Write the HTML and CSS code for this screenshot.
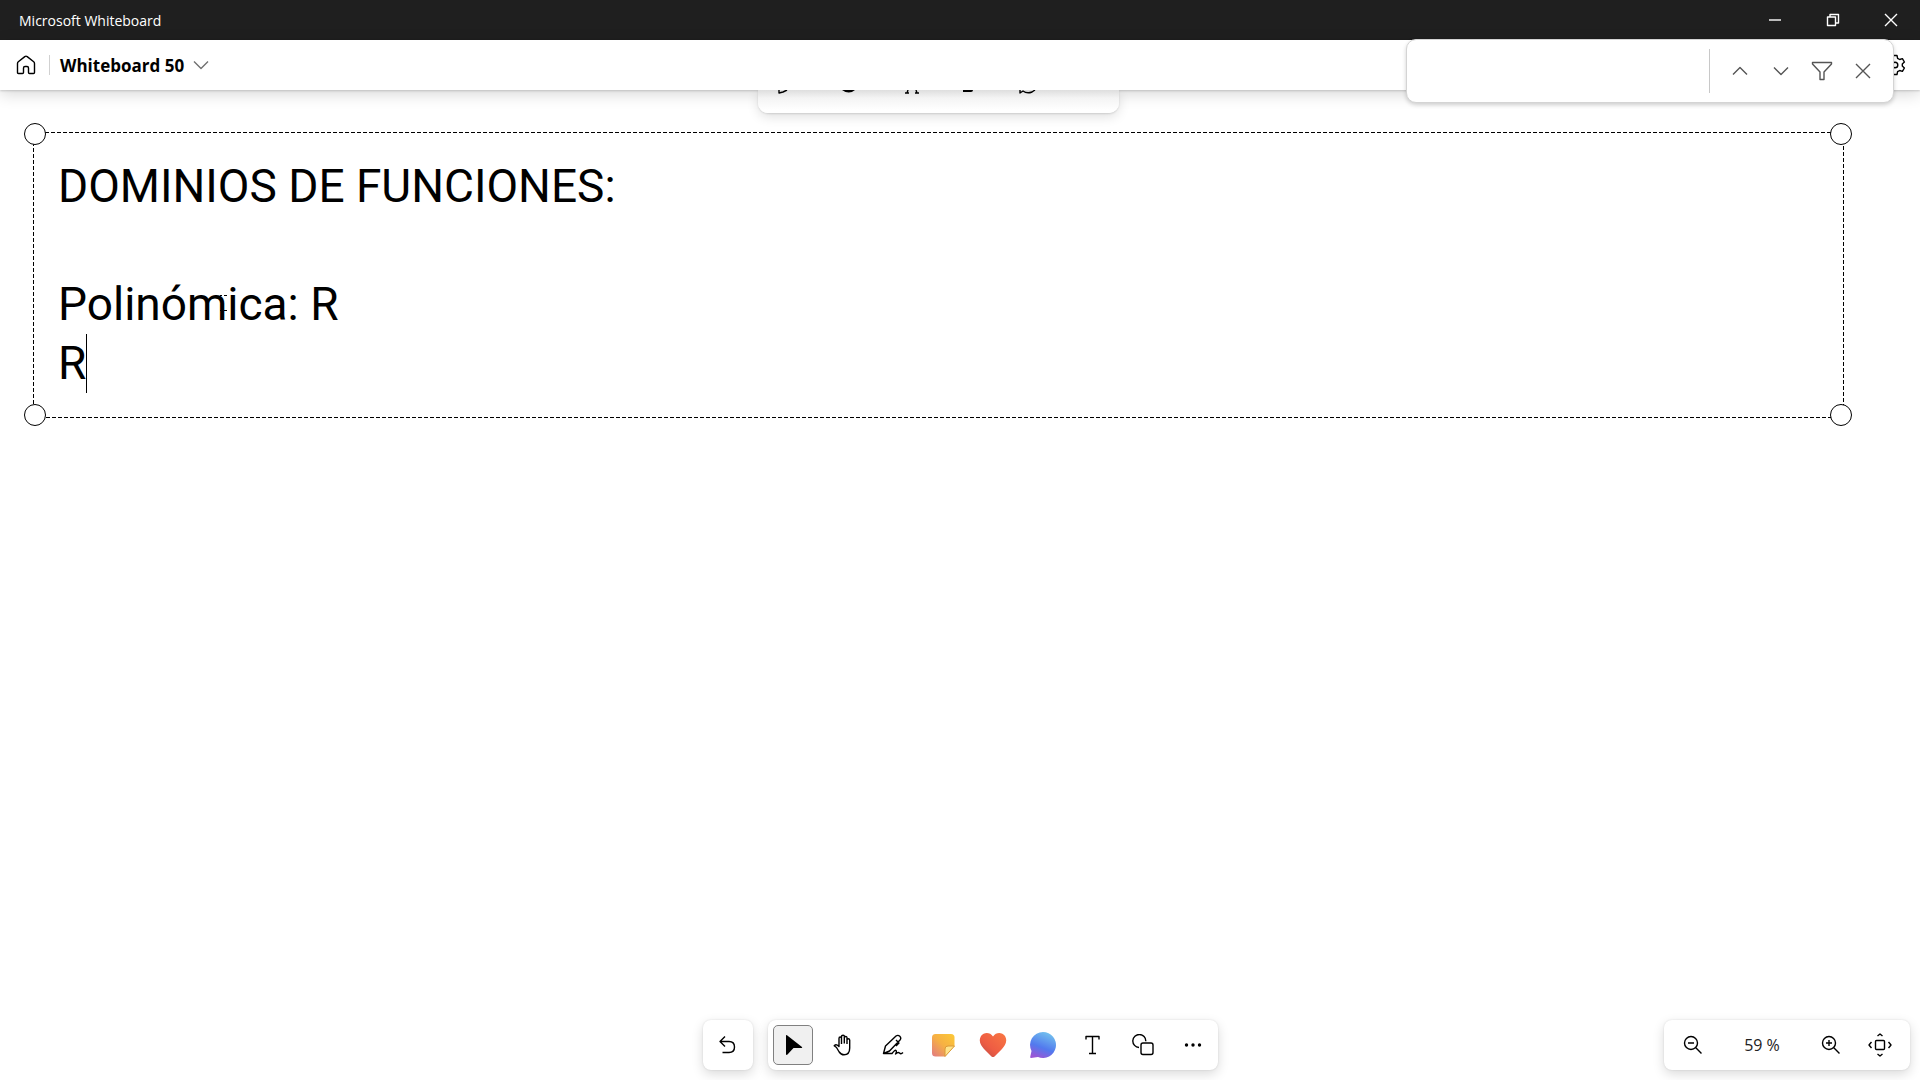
FILE: index.html
```html
<!DOCTYPE html>
<html lang="es">
<head>
    <meta charset="utf-8">
    <title>Microsoft Whiteboard</title>
    <link rel="stylesheet" href="styles.css">
</head>
<body>
    <div class="titlebar">
        <span class="app-name">Microsoft Whiteboard</span>
        <div class="window-buttons">
            <button aria-label="Minimizar"><svg width="14" height="14" viewBox="0 0 14 14"><path d="M1 7H13"/></svg></button>
            <button aria-label="Restaurar"><svg width="14" height="14" viewBox="0 0 14 14"><path d="M1.500 4H9.500V12.500H1.500ZM4 4V1.500H12.500V10H9.500"/></svg></button>
            <button aria-label="Cerrar"><svg width="14" height="14" viewBox="0 0 14 14"><path d="M1 1L13 13M13 1L1 13"/></svg></button>
        </div>
    </div>

    <header class="header">
        <button class="home" aria-label="Inicio"><svg width="20" height="20" viewBox="0 0 20 20"><path d="M1.500 8.500Q1.500 7.500 2.300 6.800L8.800 1.600Q10 .7 11.200 1.600L17.700 6.800Q18.500 7.500 18.500 8.500V17.500Q18.500 18.500 17.500 18.500H13.500Q12.500 18.500 12.500 17.500V13Q12.500 11.500 11 11.500H9Q7.500 11.500 7.500 13V17.500Q7.500 18.500 6.500 18.500H2.500Q1.500 18.500 1.500 17.500Z"/></svg></button>
        <button class="board-name">Whiteboard 50 <svg width="16" height="10" viewBox="0 0 16 10"><path d="M1 1.500L8 8.500L15 1.500"/></svg></button>
        <button class="settings" aria-label="Configuración"><svg width="22" height="22" viewBox="0 0 22 22"><path d="M9 1.500H13L13.600 4.300L15.700 5.500L18.400 4.600L20.400 8L18.300 9.900V12.100L20.400 14L18.400 17.400L15.700 16.500L13.600 17.700L13 20.500H9L8.400 17.700L6.300 16.500L3.600 17.400L1.600 14L3.700 12.100V9.900L1.600 8L3.600 4.600L6.300 5.500L8.400 4.300Z"/><circle cx="11" cy="11" r="2.800"/></svg></button>
    </header>

    <form class="find">
        <input type="text" aria-label="Buscar">
        <div class="find-buttons">
            <button type="button" aria-label="Anterior"><svg width="16" height="10" viewBox="0 0 16 10"><path d="M1 8.500L8 1.500L15 8.500"/></svg></button>
            <button type="button" aria-label="Siguiente"><svg width="16" height="10" viewBox="0 0 16 10"><path d="M1 1.500L8 8.500L15 1.500"/></svg></button>
            <button type="button" aria-label="Filtro"><svg width="22" height="20" viewBox="0 0 22 20"><path d="M1.500 1.500H20.500V3L13 11V18.500H9V11L1.500 3Z"/></svg></button>
            <button type="button" aria-label="Cerrar búsqueda"><svg width="16" height="16" viewBox="0 0 16 16"><path d="M1 1L15 15M15 1L1 15"/></svg></button>
        </div>
    </form>

    <main class="canvas">
        <div class="context-bar">
            <svg width="360" height="23" viewBox="0 0 360 23">
                <path d="M21 0V3L25 2L29 0"/>
                <path class="solid" d="M84 0H97Q91 5 84 0ZM205 0H215Q215 2 213 2H205Z"/>
                <path d="M147 3H151M149 3L150 0M157 3H161M159 3L158 0M262 0V3L265 1Q269 4 274 2L277 0"/>
            </svg>
        </div>

        <div class="text-box">
            <svg class="outline" width="100%" height="100%"><rect width="100%" height="100%"/></svg>
            <p>DOMINIOS DE FUNCIONES:</p>
            <p><br></p>
            <p>Polinómica: R</p>
            <p class="editing">R</p>
            <span class="handle top left"></span>
            <span class="handle top right"></span>
            <span class="handle bottom left"></span>
            <span class="handle bottom right"></span>
            <svg class="pointer" width="9" height="18" viewBox="0 0 9 18"><path d="M1 1.500H3M5 1.500H8M1 16.500H3M5 16.500H8"/></svg>
        </div>
    </main>

    <footer class="footer">
        <div class="panel undo">
            <button aria-label="Deshacer"><svg width="20" height="20" viewBox="0 0 20 20"><path d="M7 1.500L2 6.500L7 11.500M2 6.500H11Q16.500 6.500 16.500 12T11 17.500H4.500"/></svg></button>
        </div>
        <div class="panel tools">
            <button class="selected" aria-label="Seleccionar"><svg width="20" height="22" viewBox="0 0 20 22"><path class="solid" d="M3 1.500Q3 .5 4 1.200L19 13Q19.700 14 18.500 14H10.500L4.500 20.500Q3 21.500 3 20Z"/></svg></button>
            <button aria-label="Mover"><svg width="22" height="22" viewBox="0 0 22 22"><path d="M7 11V4.500Q7 3 8.200 3T9.500 4.500V10M9.500 9V2.500Q9.500 1.200 11 1.200T12.300 2.500V9.500M12.300 4Q12.300 2.500 13.700 2.500T15 4V10M15 6Q15 4.700 16.300 4.700T17.700 6V14Q17.700 20.800 12 20.800Q9 20.800 7.200 18L4.500 13.500L2.200 11.800Q4.500 9.500 7 12.500V10"/></svg></button>
            <button aria-label="Entradas de lápiz"><svg width="22" height="22" viewBox="0 0 22 22"><path d="M1.500 19.500L3.500 12L14 2Q16 .6 17.800 2.300T18 6L7.500 17ZM14 6L17 9L14 12M1.500 19.500H10Q13 15.500 14 16.500T13.500 20Q16 17.500 17.500 19T21 18.500"/></svg></button>
            <button aria-label="Notas"><svg width="24" height="24" viewBox="0 0 24 24">
                <defs><linearGradient id="note" x1="1" y1="0" x2="0" y2="1"><stop offset="0" stop-color="#fcc936"/><stop offset=".5" stop-color="#f6b044"/><stop offset="1" stop-color="#e17983"/></linearGradient></defs>
                <path class="note" d="M4.500 1H20Q23.500 1 23.500 4.500V13L14 23.500H4.500Q1 23.500 1 20V4.500Q1 1 4.500 1Z"/><path class="fold" d="M23.500 13H17Q14 13 14 16V23.500Z"/></svg></button>
            <button aria-label="Reacciones"><svg width="28" height="26" viewBox="0 0 28 26">
                <defs><linearGradient id="heart" x1="1" y1="0" x2="0" y2="1"><stop offset="0" stop-color="#f97843"/><stop offset=".6" stop-color="#ee5c43"/><stop offset="1" stop-color="#b94b49"/></linearGradient></defs>
                <path class="heart" d="M14 4.500C17 0 23 0 26 4C29 9 26 13.500 23 17L15.500 24.500Q14 25.500 12.500 24.500L5 17C2 13.500-1 9 2 4C5 0 11 0 14 4.500Z"/></svg></button>
            <button aria-label="Comentario"><svg width="28" height="28" viewBox="0 0 28 28">
                <defs><linearGradient id="bubble" x1=".7" y1="0" x2=".3" y2="1"><stop offset="0" stop-color="#74c3ee"/><stop offset=".6" stop-color="#5279ee"/><stop offset="1" stop-color="#9a56d5"/></linearGradient></defs>
                <path class="bubble" d="M14 1A13 13 0 1 1 9 26L2 27Q1 27 1.200 26L2.500 20A13 13 0 0 1 14 1Z"/></svg></button>
            <button aria-label="Texto"><svg width="20" height="22" viewBox="0 0 20 22"><path d="M3 5.500V2.500H16V5.500M9.500 2.500V19.500M6 19.500H13"/></svg></button>
            <button aria-label="Formas"><svg width="22" height="22" viewBox="0 0 22 22"><path d="M7 13.500A6.500 6.500 0 1 1 13.800 7.200"/><rect x="9" y="9" width="12" height="11.500" rx="2"/></svg></button>
            <button aria-label="Más opciones"><svg width="18" height="6" viewBox="0 0 18 6"><circle class="solid" cx="2.500" cy="3" r="1.700"/><circle class="solid" cx="9" cy="3" r="1.700"/><circle class="solid" cx="15.500" cy="3" r="1.700"/></svg></button>
        </div>
        <div class="panel zoom">
            <button aria-label="Alejar"><svg width="20" height="20" viewBox="0 0 20 20"><circle cx="8" cy="8" r="6.500"/><path d="M12.800 12.800L18.500 18.500M5 8H11"/></svg></button>
            <button class="zoom-level">59 %</button>
            <button aria-label="Acercar"><svg width="20" height="20" viewBox="0 0 20 20"><circle cx="8" cy="8" r="6.500"/><path d="M12.800 12.800L18.500 18.500M5 8H11M8 5V11"/></svg></button>
            <button class="fit" aria-label="Ajustar a la pantalla"><svg width="24" height="24" viewBox="0 0 24 24"><rect x="7.500" y="7.500" width="9" height="9" rx="1"/><path d="M9.500 3L12 1L14.500 3M9.500 21L12 23L14.500 21M3.500 9L1 12L3.500 15M20.500 9L23 12L20.500 15"/></svg></button>
        </div>
    </footer>
</body>
</html>
```
FILE: styles.css
```css
* {
    box-sizing: border-box;
}
body {
    display: flex;
    flex-direction: column;
    height: 100vh;
    margin: 0;
    background-color: white;
    color: black;
    font-family: "Open Sans", "Noto Sans", sans-serif;
    overflow: hidden;
}
button {
    display: flex;
    align-items: center;
    justify-content: center;
    padding: 0;
    border: 0;
    background: none;
    color: inherit;
    font: inherit;
}
svg {
    flex: none;
    fill: none;
    stroke: currentColor;
    stroke-width: 1.4;
    stroke-linejoin: round;
}
.solid {
    fill: currentColor;
    stroke: none;
}

/* window title */
.titlebar {
    display: flex;
    flex: none;
    align-items: center;
    justify-content: space-between;
    height: 40px;
    padding-left: 19px;
    background-color: #1f1f1f;
    color: white;
}
.app-name {
    font-size: 14px;
}
.window-buttons {
    display: flex;
}
.window-buttons button {
    width: 58px;
    height: 40px;
}

/* board header */
.header {
    position: relative;
    z-index: 2;
    display: flex;
    flex: none;
    align-items: center;
    height: 50px;
    padding: 0 14px 0 16px;
    background-color: white;
    box-shadow: 0 1px 2px rgba(0, 0, 0, 0.16), 0 4px 16px rgba(0, 0, 0, 0.16);
}
.home {
    height: 20px;
    padding-right: 13px;
}
.board-name {
    gap: 9px;
    height: 20px;
    padding-left: 10px;
    border-left: 1px solid #d1d1d1;
    font-size: 17px;
    font-weight: 700;
}
.board-name svg {
    color: #707070;
}
.settings {
    margin-left: auto;
}

/* find bar over the header */
.find {
    position: absolute;
    z-index: 3;
    top: 39px;
    right: 26px;
    display: flex;
    align-items: center;
    width: 488px;
    height: 64px;
    border: 1px solid #d4d4d4;
    border-radius: 10px;
    background-color: white;
    box-shadow: 0 2px 4px rgba(0, 0, 0, 0.18);
}
.find input {
    flex: 1;
    min-width: 0;
    height: 40px;
    padding: 0 16px;
    border: 0;
    outline: 0;
    background: none;
    font: inherit;
}
.find-buttons {
    display: flex;
    align-items: center;
    height: 44px;
    padding: 0 10px 0 9px;
    border-left: 1px solid #c8c8c8;
    color: #555;
}
.find-buttons button {
    width: 41px;
    height: 40px;
}

/* canvas */
.canvas {
    position: relative;
    flex: 1;
    padding: 42px 77px 0 33px;
}
.context-bar {
    position: absolute;
    z-index: 2;
    top: 0;
    left: 50%;
    width: 361px;
    margin-left: -202px;
    height: 23px;
    border-radius: 0 0 10px 10px;
    background-image: linear-gradient(#dedede, #f4f4f4 8px, white 20px);
    box-shadow: 0 1px 2px rgba(0, 0, 0, 0.12), 0 4px 12px rgba(0, 0, 0, 0.12);
    clip-path: inset(0 -16px -20px);
}
.text-box {
    position: relative;
    padding: 25px 24px 24px 25px;
    font-family: Roboto, sans-serif;
    font-size: 46px;
    line-height: 59px;
}
.text-box p {
    margin: 0;
}
.outline {
    position: absolute;
    top: 0;
    left: 0;
    overflow: visible;
    stroke-width: 1;
    stroke-dasharray: 4 2;
    shape-rendering: crispEdges;
}
.editing::after {
    content: "";
    display: inline-block;
    width: 1px;
    height: 59px;
    background-color: black;
    vertical-align: top;
}
.handle {
    position: absolute;
    width: 22px;
    height: 22px;
    border: 1px solid black;
    border-radius: 50%;
    background-color: white;
}
.top {
    top: -9px;
}
.bottom {
    bottom: -9px;
}
.left {
    left: -9px;
}
.right {
    right: -9px;
}
.pointer {
    position: absolute;
    top: 162px;
    left: 186px;
    stroke-width: 1;
}

/* bottom bars */
.footer {
    position: relative;
    display: flex;
    flex: none;
    justify-content: center;
    gap: 15px;
    padding-bottom: 10px;
}
.panel {
    display: flex;
    gap: 10px;
    padding: 5px;
    border-radius: 8px;
    background-color: white;
    box-shadow: 0 0 2px rgba(0, 0, 0, 0.12), 0 4px 12px rgba(0, 0, 0, 0.15);
}
.panel button {
    width: 40px;
    height: 40px;
}
.panel .selected {
    border: 1px solid #808080;
    border-radius: 5px;
    background-color: #f0f0f0;
}
.zoom {
    position: absolute;
    right: 10px;
    gap: 0;
    padding: 5px 10px 5px 9px;
}
.panel .zoom-level {
    width: 98px;
    color: #222;
    font-size: 16px;
}
.fit {
    margin-left: 9px;
}
.note {
    fill: url(#note);
    stroke: none;
}
.fold {
    fill: #ffe38a;
    stroke: #d99a3a;
    stroke-width: 1;
}
.heart {
    fill: url(#heart);
    stroke: none;
}
.bubble {
    fill: url(#bubble);
    stroke: none;
}
```
